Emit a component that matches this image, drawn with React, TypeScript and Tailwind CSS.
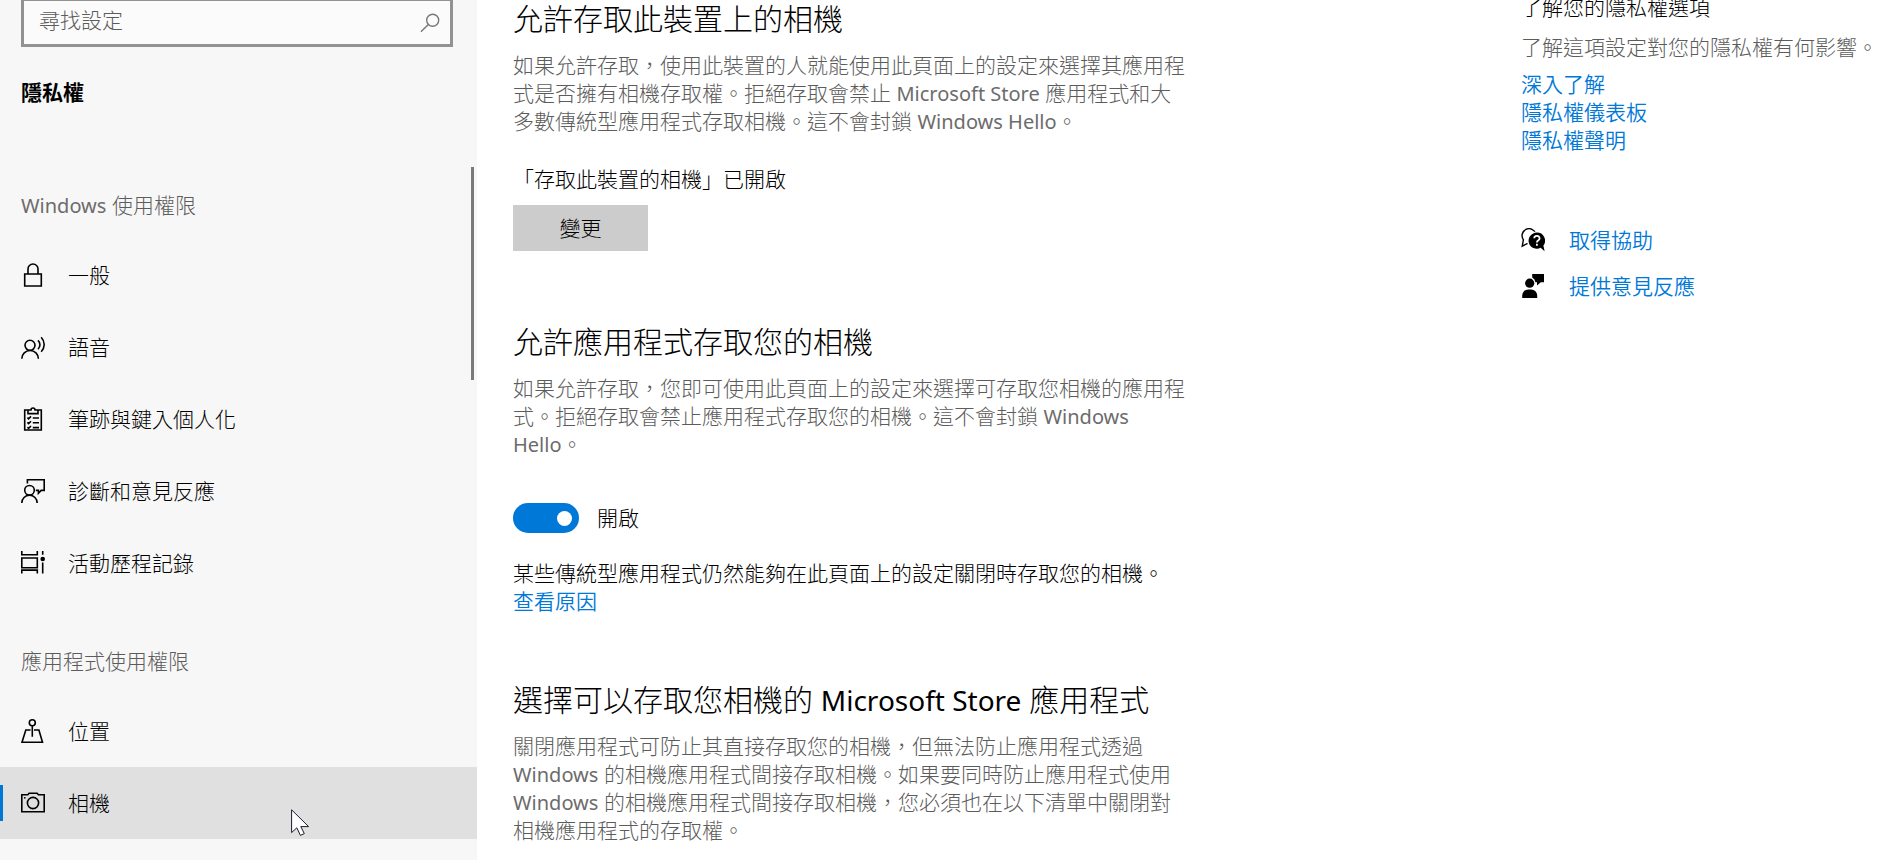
import { useState, type ReactNode } from "react";

function Icon({ children }: { children: ReactNode }) {
  return (
    <svg
      viewBox="0 0 24 24"
      className="size-6 shrink-0"
      fill="none"
      stroke="currentColor"
      strokeWidth="1.6"
      aria-hidden="true"
    >
      {children}
    </svg>
  );
}

const icons = {
  lock: (
    <Icon>
      <path d="M3.7 11h16.6v12H3.7zM7 11V6a5 5 0 0 1 10 0v5" />
    </Icon>
  ),
  speech: (
    <Icon>
      <circle cx="9" cy="10.3" r="5" />
      <path d="M.8 23.8a8.3 8.3 0 0 1 16.6 0M17 5.4c2.6 2.6 2.6 6.2 0 8.8M20.2 2.2c4 4.4 4 10.2 0 14.6" />
    </Icon>
  ),
  clipboard: (
    <Icon>
      <path d="M7 3H3.7v20h16.6V3H17M7 3h3a2 2 0 0 1 4 0h3v3.6H7z" />
      <path d="M6.4 10.6l1.2 1.2 2.4-2.4M6.4 15.4l1.2 1.2 2.4-2.4M6.4 20.2l1.2 1.2L10 19M11.8 11H18M11.8 15.8H18M11.8 20.6H18" />
    </Icon>
  ),
  feedback: (
    <Icon>
      <circle cx="8.5" cy="11.3" r="4.8" />
      <path d="M.8 24a7.7 7.7 0 0 1 15.4 0M6.4 4.6V.8h16.8v10.6h-3l-2.8 2.9v-2.9h-2.6" />
    </Icon>
  ),
  activity: (
    <Icon>
      <path d="M.8 0v3.7h15.5V0M.8 7h15.5v9.8H.8zM.8 22.4v-3.3h15.5v3.3M21.7 0v3.8M21.7 11.4v11" />
      <circle cx="21.7" cy="8" r="2.3" fill="currentColor" stroke="none" />
    </Icon>
  ),
  location: (
    <Icon>
      <circle cx="11.3" cy="3.8" r="3" />
      <path d="M11.3 6.7v11M9.6 11H4.8L1 23.2h20.5L17.9 11H13" />
    </Icon>
  ),
  camera: (
    <Icon>
      <path d="M.8 3.7h6l1.3-1.4h8l1.3 1.4h5.8v17H.8z" />
      <circle cx="12" cy="12" r="5.6" />
      <circle cx="3.8" cy="6.8" r=".9" fill="currentColor" stroke="none" />
    </Icon>
  ),
  help: (
    <Icon>
      <path d="M6.6 15.4 1.2 18.2 2.4 11.8A7 7 0 1 1 14.8 5.8" strokeWidth="1.4" />
      <path
        d="M15.8 4.6a8.1 8.1 0 1 0 3.8 15.2l4 3.4-1.2-5.6A8.1 8.1 0 0 0 15.8 4.6z"
        fill="currentColor"
        stroke="#fff"
        strokeWidth="2.4"
        paintOrder="stroke"
      />
      <path d="M13.2 10.2a2.7 2.4 0 1 1 4.2 2c-1 .6-1.5 1-1.5 2.2M15.9 15.8v1.9" stroke="#fff" strokeWidth="1.8" />
    </Icon>
  ),
  give: (
    <Icon>
      <g fill="currentColor" stroke="none">
        <circle cx="8.7" cy="9.2" r="4.6" />
        <path d="M1.2 24v-2.6a6 6 0 0 1 6-6h3a6 6 0 0 1 6 6V24zM11.2 0H23v8.2h-3.2L16 11.6V8.2h-1.6a6 6 0 0 0-3.2-4.8z" />
      </g>
    </Icon>
  ),
};

const windowsItems = [
  { label: "一般", icon: icons.lock },
  { label: "語音", icon: icons.speech },
  { label: "筆跡與鍵入個人化", icon: icons.clipboard },
  { label: "診斷和意見反應", icon: icons.feedback },
  { label: "活動歷程記錄", icon: icons.activity },
];

const appItems = [
  { label: "位置", icon: icons.location },
  { label: "相機", icon: icons.camera, active: true },
];

function NavItem({ label, icon, active }: { label: string; icon: ReactNode; active?: boolean }) {
  return (
    <li className={active ? "bg-[#e0e0e0]" : ""}>
      <a href="#" className="flex h-18 items-center" aria-current={active ? "page" : undefined}>
        <span className={active ? "h-9 w-[3px] bg-[#0078d7]" : "h-9 w-[3px]"} />
        <span className="ml-[18px]">{icon}</span>
        <span className="ml-[23px]">{label}</span>
      </a>
    </li>
  );
}

// Latin words run a little wide next to the Chinese glyphs
function En({ children }: { children: ReactNode }) {
  return (
    <span lang="en" className="text-[20px] leading-none font-normal text-[#6c6c6c]">
      {children}
    </span>
  );
}

function Heading({ children }: { children: ReactNode }) {
  return <h2 className="text-[30px] leading-[38px]">{children}</h2>;
}

function Description({ children }: { children: ReactNode }) {
  return <p className="mt-[13px] text-[#5c5c5c]">{children}</p>;
}

function Link({ children }: { children: ReactNode }) {
  return (
    <a href="#" className="font-[350] text-[#0078d7]">
      {children}
    </a>
  );
}

export default function App() {
  const [on, setOn] = useState(true);

  return (
    <div
      lang="zh-TW"
      className="flex min-h-screen bg-white font-['Noto_Sans','Noto_Sans_CJK_TC',sans-serif] text-[21px] leading-7 font-light text-black"
    >
      <aside className="relative w-[477px] shrink-0 bg-[#f7f7f7]">
        <div className="mx-[21px] flex h-[47px] w-[432px] items-center border-3 border-t border-[#929292] bg-[#fbfbfb] pr-2.5 pl-[15px]">
          <input
            type="search"
            aria-label="尋找設定"
            placeholder="尋找設定"
            className="min-w-0 flex-1 bg-transparent pb-1.5 leading-7 outline-none placeholder:text-[#5c5c5c]"
          />
          <svg viewBox="0 0 20 20" className="size-5 text-[#777777]" fill="none" stroke="currentColor" strokeWidth="1.4">
            <circle cx="12.7" cy="7.2" r="6" />
            <path d="M8.4 11.5.9 18.8" />
          </svg>
        </div>
        <h1 className="mt-[31px] ml-[21px] font-bold">隱私權</h1>

        <nav>
          <h2 className="mt-[85px] mb-5 ml-[21px] text-[#5c5c5c]">
            <En>Windows</En> 使用權限
          </h2>
          <ul>
            {windowsItems.map((item) => (
              <NavItem key={item.label} {...item} />
            ))}
          </ul>
          <h2 className="mt-12 mb-5 ml-[21px] text-[#5c5c5c]">應用程式使用權限</h2>
          <ul>
            {appItems.map((item) => (
              <NavItem key={item.label} {...item} />
            ))}
          </ul>
        </nav>

        {/* scroll thumb */}
        <div className="absolute top-[167px] right-[3px] h-[213px] w-[3px] bg-[#7a7a7a]" />
        {/* mouse pointer */}
        <svg viewBox="0 0 19 28" className="absolute top-[809px] left-[291px] h-7 w-[19px]" fill="#fff" stroke="#1b1b2b">
          <path d="M.6.8v22.8l5.2-4.8 3.6 7.6 3.9-1.8-3.5-7h7.8z" />
        </svg>
      </aside>

      <main className="flex-1 pl-9">
        <div className="max-w-[674px]">
          <section>
            <Heading>允許存取此裝置上的相機</Heading>
            <Description>
              如果允許存取，使用此裝置的人就能使用此頁面上的設定來選擇其應用程式是否擁有相機存取權。拒絕存取會禁止 <En>Microsoft Store</En>{" "}
              應用程式和大多數傳統型應用程式存取相機。這不會封鎖 <En>Windows Hello</En>。
            </Description>
            <p className="mt-[30px]">「存取此裝置的相機」已開啟</p>
            <button type="button" className="mt-3 h-[46px] w-[135px] bg-[#cccccc]">
              變更
            </button>
          </section>

          <section className="mt-[72px]">
            <Heading>允許應用程式存取您的相機</Heading>
            <Description>
              如果允許存取，您即可使用此頁面上的設定來選擇可存取您相機的應用程式。拒絕存取會禁止應用程式存取您的相機。這不會封鎖 <En>Windows Hello</En>。
            </Description>
            <div className="mt-[45px] flex items-center">
              <input
                id="camera-access"
                type="checkbox"
                role="switch"
                checked={on}
                onChange={(e) => setOn(e.target.checked)}
                className="flex h-[30px] w-[66px] appearance-none items-center rounded-full bg-[#999999] px-[7px] before:size-[15px] before:rounded-full before:bg-white checked:justify-end checked:bg-[#0078d7]"
              />
              <label htmlFor="camera-access" className="ml-[18px]">
                {on ? "開啟" : "關閉"}
              </label>
            </div>
            <p className="mt-[26px]">某些傳統型應用程式仍然能夠在此頁面上的設定關閉時存取您的相機。</p>
            <Link>查看原因</Link>
          </section>

          <section className="mt-[66px]">
            <Heading>
              選擇可以存取您相機的{" "}
              <span lang="en" className="text-[28px] leading-none font-normal">
                Microsoft Store
              </span>{" "}
              應用程式
            </Heading>
            <Description>
              關閉應用程式可防止其直接存取您的相機，但無法防止應用程式透過 <En>Windows</En> 的相機應用程式間接存取相機。如果要同時防止應用程式使用 <En>Windows</En>{" "}
              的相機應用程式間接存取相機，您必須也在以下清單中關閉對相機應用程式的存取權。
            </Description>
          </section>
        </div>
      </main>

      <aside className="w-[369px] shrink-0">
        <h2 className="-mt-[7px]">了解您的隱私權選項</h2>
        <p className="mt-3 text-[#5c5c5c]">了解這項設定對您的隱私權有何影響。</p>
        <div className="mt-[9px] flex flex-col items-start">
          <Link>深入了解</Link>
          <Link>隱私權儀表板</Link>
          <Link>隱私權聲明</Link>
        </div>
        <div className="mt-[63px]">
          <div className="flex h-[46px] items-center gap-6">
            {icons.help}
            <Link>取得協助</Link>
          </div>
          <div className="flex h-[46px] items-center gap-6">
            {icons.give}
            <Link>提供意見反應</Link>
          </div>
        </div>
      </aside>
    </div>
  );
}
